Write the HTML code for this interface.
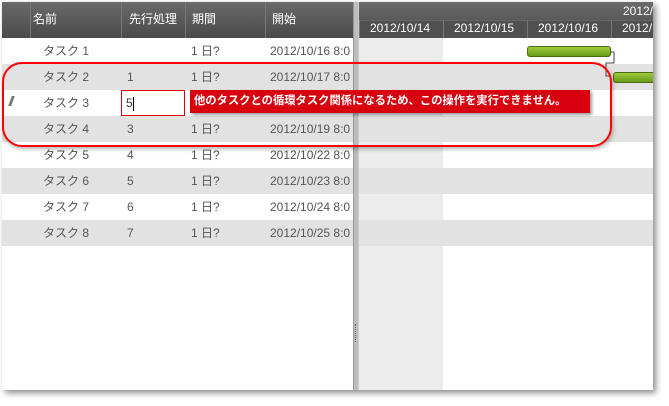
<!DOCTYPE html><html><head><meta charset="utf-8"><style>
*{margin:0;padding:0;box-sizing:border-box}
body{width:669px;height:406px;background:#fff;position:relative;overflow:hidden;font-family:"Liberation Sans","Noto Sans CJK JP",sans-serif;font-size:12px;color:#555}
.frame{position:absolute;left:2px;top:2px;width:651px;height:388px;background:#fff;box-shadow:3px 3px 6px rgba(0,0,0,.45);overflow:hidden}
.hdr{position:absolute;left:0;top:0;height:36px;background:linear-gradient(#6a6a6a,#4a4a4a);color:#fff}
.hc{position:absolute;top:0;height:36px;line-height:34px;border-left:1px solid #777;padding-left:2px}
.row{position:absolute;left:0;height:26px;line-height:26px;width:651px}
.g{background:#e2e2e2}
.t{position:absolute;top:0;white-space:nowrap}
</style></head><body><div class="frame">
<div class="hdr" style="width:351px"><div class="hc" style="left:28px;width:92px">名前</div><div class="hc" style="left:119px;width:65px;padding-left:7px">先行処理</div><div class="hc" style="left:183px;width:80px;padding-left:6px">期間</div><div class="hc" style="left:263px;width:90px;padding-left:6px">開始</div></div>
<div class="hdr" style="left:357px;width:294px">
<div style="position:absolute;right:0;top:1px;line-height:16px;font-size:12px">2012/</div>
<div style="position:absolute;top:18px;left:0;width:294px;height:18px;background:#505050;border-top:1px solid #666"></div>
<div class="hc" style="top:18px;height:18px;line-height:17px;left:0;width:85px;padding-left:10px">2012/10/14</div>
<div class="hc" style="top:18px;height:18px;line-height:17px;left:84px;width:85px;padding-left:10px">2012/10/15</div>
<div class="hc" style="top:18px;height:18px;line-height:17px;left:168px;width:85px;padding-left:10px">2012/10/16</div>
<div class="hc" style="top:18px;height:18px;line-height:17px;left:252px;width:60px;padding-left:10px">2012/</div>
</div>
<div style="position:absolute;left:357px;top:36px;width:84px;height:352px;background:#ececec"></div>
<div class="row" style="top:36px"><span class="t" style="left:41px">タスク 1</span><span class="t" style="left:189px">1 日?</span><span class="t" style="left:268px">2012/10/16 8:0</span></div>
<div class="row g" style="top:62px"><span class="t" style="left:41px">タスク 2</span><span class="t" style="left:125px">1</span><span class="t" style="left:189px">1 日?</span><span class="t" style="left:268px">2012/10/17 8:0</span></div>
<div class="row" style="top:88px"><span class="t" style="left:41px">タスク 3</span></div>
<div class="row g" style="top:114px"><span class="t" style="left:41px">タスク 4</span><span class="t" style="left:125px">3</span><span class="t" style="left:189px">1 日?</span><span class="t" style="left:268px">2012/10/19 8:0</span></div>
<div class="row" style="top:140px"><span class="t" style="left:41px">タスク 5</span><span class="t" style="left:125px">4</span><span class="t" style="left:189px">1 日?</span><span class="t" style="left:268px">2012/10/22 8:0</span></div>
<div class="row g" style="top:166px"><span class="t" style="left:41px">タスク 6</span><span class="t" style="left:125px">5</span><span class="t" style="left:189px">1 日?</span><span class="t" style="left:268px">2012/10/23 8:0</span></div>
<div class="row" style="top:192px"><span class="t" style="left:41px">タスク 7</span><span class="t" style="left:125px">6</span><span class="t" style="left:189px">1 日?</span><span class="t" style="left:268px">2012/10/24 8:0</span></div>
<div class="row g" style="top:218px"><span class="t" style="left:41px">タスク 8</span><span class="t" style="left:125px">7</span><span class="t" style="left:189px">1 日?</span><span class="t" style="left:268px">2012/10/25 8:0</span></div>
<div style="position:absolute;left:351px;top:0;width:6px;height:388px;background:#bcbcbc;border-left:1px solid #999;border-right:1px solid #ccc"></div>
<div style="position:absolute;left:353px;top:322px;width:1px;height:18px;border-left:1px dotted #666"></div>
<div style="position:absolute;left:525px;top:44px;width:84px;height:11px;border-radius:3px;background:linear-gradient(#9fcc3a,#6a9a1a);border:1px solid #4a6a14"></div>
<div style="position:absolute;left:611px;top:70px;width:50px;height:11px;border-radius:3px;background:linear-gradient(#9fcc3a,#6a9a1a);border:1px solid #4a6a14"></div>
<svg style="position:absolute;left:595px;top:45px" width="20" height="35"><path d="M13 5 H17 V16 H9 V29 H14" fill="none" stroke="#444" stroke-width="1"/></svg>
<div style="position:absolute;left:8px;top:94px;width:3px;height:10px;background:#777;transform:skewX(-20deg)"></div>
<div style="position:absolute;left:119px;top:88px;width:64px;height:26px;border:1px solid #d00;background:#fff;line-height:24px;padding-left:4px;color:#333">5<span style="display:inline-block;width:1px;height:14px;background:#000;vertical-align:middle"></span></div>
<div style="position:absolute;left:188px;top:88px;width:400px;height:23px;background:#d8000e;color:#fff;font-weight:bold;font-size:11.3px;line-height:23px;padding-left:4px;white-space:nowrap;overflow:hidden;box-shadow:2px 2px 3px rgba(0,0,0,.4)">他のタスクとの循環タスク関係になるため、この操作を実行できません。</div>
<div style="position:absolute;left:0;top:60px;width:610px;height:85px;border:2px solid #f00;border-radius:20px;box-shadow:1px 2px 4px rgba(0,0,0,.3)"></div>
</div></body></html>
